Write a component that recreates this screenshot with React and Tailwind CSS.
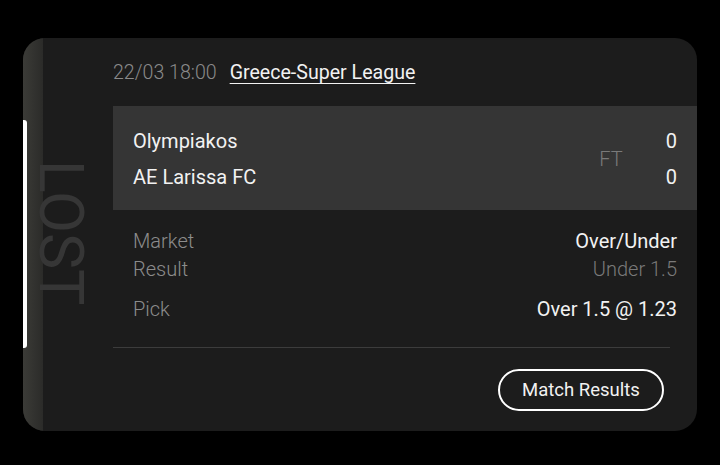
export default function App() {
  const font = { fontFamily: "Roboto, 'Noto Sans', sans-serif" };
  return (
    <div className="w-[720px] h-[465px] bg-black pt-[38px] pl-[23px]" style={font}>
      <div className="relative flex w-[674px] h-[393px] rounded-[22px] bg-[#1c1c1c] overflow-hidden">
        <div className="w-[90px] shrink-0 bg-[linear-gradient(to_right,#3b3b37_0px,#2b2b29_20px,#1c1c1c_20px)]">
          <div className="ml-[7px] mt-[122px] [writing-mode:vertical-rl] text-[61px] leading-none font-normal text-[#363636]">
            LOST
          </div>
        </div>
        <div className="absolute left-0 top-[82px] h-[228px] w-[4px] rounded-r-[3px] bg-white" />
        <div className="flex-1 flex flex-col">
          <div className="h-[68px] pt-[2px] flex items-center gap-[13px] text-[19.6px]">
            <span className="text-[#8a8a8a] font-light">22/03 18:00</span>
            <span className="text-[#f2f2f2] underline underline-offset-[4px] decoration-[1px]">Greece-Super League</span>
          </div>
          <div className="h-[104px] bg-[#353535] flex items-center pl-[20px] pr-[20px] text-[20px]">
            <div className="flex-1 flex flex-col text-[#f2f2f2] pt-[2px]">
              <div className="h-[36px] flex items-center">Olympiakos</div>
              <div className="h-[36px] flex items-center">AE Larissa FC</div>
            </div>
            <div className="text-[#7a7a7a] font-light pt-[2px]">FT</div>
            <div className="ml-[43px] flex flex-col text-[#f2f2f2] items-end pt-[2px]">
              <div className="h-[36px] flex items-center">0</div>
              <div className="h-[36px] flex items-center">0</div>
            </div>
          </div>
          <div className="pt-[17px] pl-[20px] pr-[20px] text-[20px]">
            <div className="h-[28px] flex items-center justify-between">
              <span className="text-[#8c8c8c] font-light">Market</span>
              <span className="text-[#f2f2f2]">Over/Under</span>
            </div>
            <div className="h-[28px] flex items-center justify-between">
              <span className="text-[#8c8c8c] font-light">Result</span>
              <span className="text-[#7a7a7a] font-light">Under 1.5</span>
            </div>
            <div className="mt-[12px] h-[28px] flex items-center justify-between">
              <span className="text-[#8c8c8c] font-light">Pick</span>
              <span className="text-[#f2f2f2]">Over 1.5 @ 1.23</span>
            </div>
          </div>
          <div className="mt-[24px] mr-[27px] h-[1px] bg-[#3c3c3c]" />
          <div className="flex justify-end pr-[33px] pt-[21px]">
            <button className="h-[42px] w-[166px] pt-[2px] rounded-full border-2 border-white text-[18.5px] font-normal text-[#f2f2f2] flex items-center justify-center">
              Match Results
            </button>
          </div>
        </div>
      </div>
    </div>
  );
}
